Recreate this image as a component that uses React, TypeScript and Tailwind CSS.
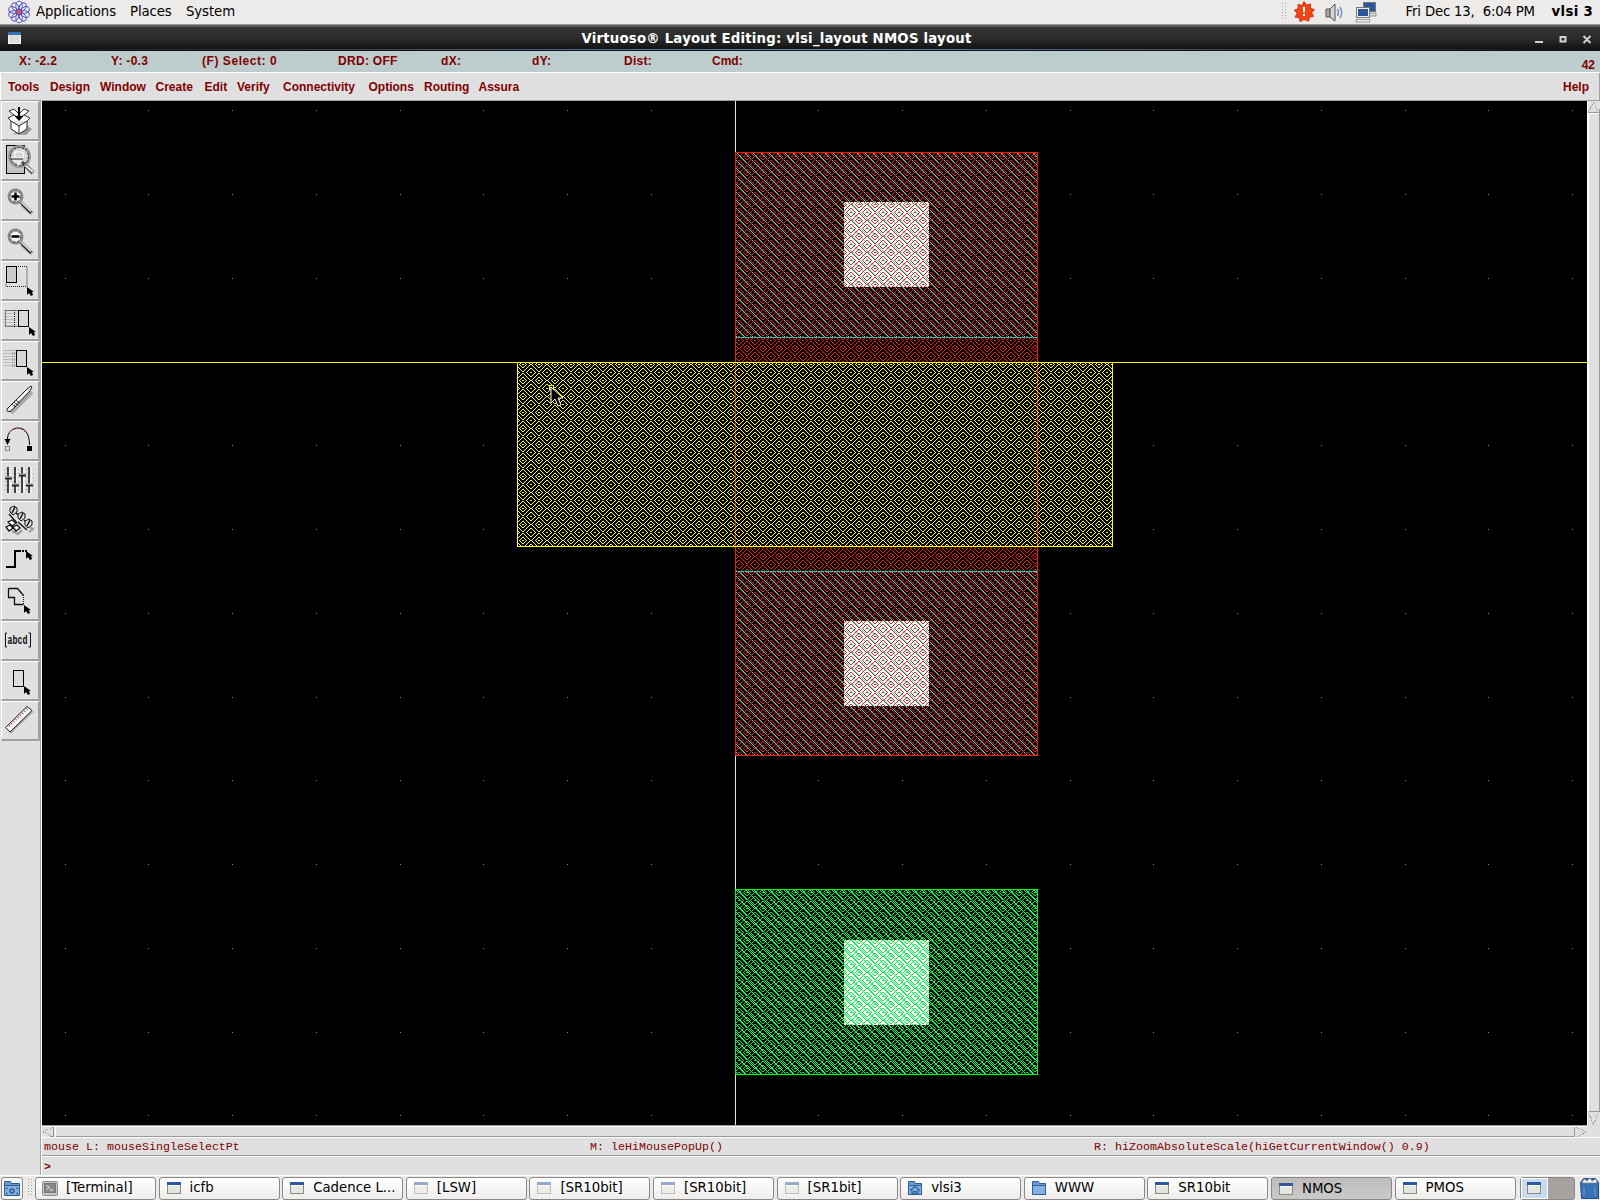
import type { ReactNode } from "react";

const wrap = (d: number) => Math.min(Math.abs(d), 16 - Math.abs(d));

// 16x16 stipple of nested diamonds, one pixel wide lines every four pixels
function diamondTile() {
  let d = "";
  for (let y = 0; y < 16; y++)
    for (let x = 0; x < 16; x++) {
      const s = Math.floor(wrap(x + 0.5 - 3)) + wrap(y - 4);
      if (s === 15 || s % 4 === 0) d += `M${x} ${y}h1v1h-1z`;
    }
  return d;
}

// 8x8 stipple of a falling diagonal
function hatchTile() {
  let d = "";
  for (let y = 0; y < 8; y++) d += `M${y} ${y}h1v1h-1z`;
  return d;
}

const DIAMONDS = diamondTile();
const HATCH = hatchTile();

function Stipple({ id, color }: { id: string; color: string }) {
  return (
    <pattern id={id} width="16" height="16" patternUnits="userSpaceOnUse">
      <path d={DIAMONDS} fill={color} />
    </pattern>
  );
}

function Box({ x, y, w, h, fill, stroke }: { x: number; y: number; w: number; h: number; fill: string; stroke?: string }) {
  return (
    <>
      <rect x={x} y={y} width={w} height={h} fill={fill} />
      {stroke && <rect x={x + 0.5} y={y + 0.5} width={w - 1} height={h - 1} fill="none" stroke={stroke} />}
    </>
  );
}

function GridDots() {
  const dots: ReactNode[] = [];
  for (let i = -8; i <= 10; i++)
    for (let j = -3; j <= 9; j++) {
      dots.push(<rect key={`${i},${j}`} x={Math.floor(735 + i * 83.75)} y={Math.floor(362 + j * 83.75)} width="1" height="1" fill="#8c8c8c" />);
    }
  return <>{dots}</>;
}

function LayoutCanvas() {
  return (
    <svg className="block shrink-0" width="1545" height="1024" viewBox="42 101 1545 1024" shapeRendering="crispEdges">
      <defs>
        <Stipple id="red" color="#f81a00" />
        <Stipple id="yellow" color="#ffff00" />
        <Stipple id="green" color="#00ff00" />
        <pattern id="cyan" width="8" height="8" patternUnits="userSpaceOnUse">
          <path d={HATCH} fill="#00f0f0" />
        </pattern>
      </defs>
      <rect x="42" y="101" width="1545" height="1024" fill="#000" />
      <GridDots />
      <rect x="735" y="101" width="1" height="1024" fill="#ffff00" />
      <rect x="42" y="362" width="1545" height="1" fill="#ffff00" />

      <Box x={844} y={202} w={85} h={85} fill="#fff" />
      <Box x={844} y={621} w={85} h={85} fill="#fff" />
      <Box x={735} y={152} w={303} h={186} fill="url(#cyan)" stroke="#00f0f0" />
      <Box x={735} y={571} w={303} h={185} fill="url(#cyan)" stroke="#00f0f0" />
      <rect x="735" y="152" width="303" height="604" fill="url(#red)" />
      <rect x="735.5" y="152.5" width="302" height="603" fill="none" stroke="#f81a00" />
      <Box x={517} y={362} w={596} h={185} fill="url(#yellow)" stroke="#ffff00" />

      <Box x={844} y={940} w={85} h={85} fill="#fff" />
      <Box x={735} y={889} w={303} h={186} fill="url(#cyan)" />
      <Box x={735} y={889} w={303} h={186} fill="url(#green)" stroke="#00ff00" />

      <rect x="549.5" y="385.5" width="4" height="4" fill="none" stroke="#ffff00" />
      <path d="M551 387v16l4-4 3 7 3-1-3-7h5z" fill="#000" stroke="#fff" shapeRendering="auto" />
    </svg>
  );
}

const Pointer = () => <path d="M27 26v8l2-2 2 3 2-1-1-3h2z" fill="#000" stroke="none" />;
const Magnifier = ({ children }: { children?: ReactNode }) => (
  <g transform="translate(0 1.5)">
    <path d="M22 22l10 9" stroke="#999" strokeWidth="4" />
    <path d="M21 20l10 10" stroke="#222" strokeWidth="3" />
    <path d="M21 19.500l10 9.500" stroke="#eee" strokeWidth="1.600" />
    <circle cx="15.500" cy="14" r="7" fill="#e6e6e6" stroke="#888" strokeWidth="2" />
    <circle cx="15.500" cy="14" r="5.500" fill="#f4f4f4" stroke="#333" strokeDasharray="3 1" />
    {children}
  </g>
);

const TOOLS: ReactNode[] = [
  <>
    <path d="M13 33l13 1 6-6-5-3z" fill="#999" stroke="none" />
    <path d="M11 20l8 5 8-5v8l-8 5-8-5z" fill="#fff" stroke="#222" />
    <path d="M19 25v8M11 20l-3-3 6-3 5 3 5-3 6 3-3 3M14 14l-5-4 5-2 4 4M24 14l5-4-5-2-4 4" fill="#fff" stroke="#333" />
    <path d="M19 6v13" stroke="#000" strokeWidth="2" />
    <path d="M14.500 15l4.500 5 4.500-5z" fill="#000" stroke="none" />
  </>,
  <>
    <rect x="6.500" y="4.500" width="18" height="28" fill="#c4c4c4" />
    <path d="M26 25l7 7" stroke="#555" strokeWidth="4" />
    <path d="M25 24l8 7" stroke="#eee" strokeWidth="2" />
    <circle cx="19.500" cy="15.500" r="10.500" fill="#e0e0e0" stroke="#999" strokeWidth="2" />
    <circle cx="19.500" cy="15.500" r="9" fill="#d4d4d4" stroke="#111" strokeDasharray="3 1" />
    <path d="M11 17h12M14 11h9v6M14 20h4v5M20 19v5M15 11v6" stroke="#fff" />
    <path d="M11 18h12M21 22h5M23 20v5" stroke="#222" />
  </>,
  <Magnifier><path d="M11.500 14h8M15.500 10v8" stroke="#000" strokeWidth="2.500" /></Magnifier>,
  <Magnifier><path d="M11.500 14h8" stroke="#000" strokeWidth="2.500" /></Magnifier>,
  <>
    <rect x="6.500" y="5.500" width="10" height="16" fill="#ccc" stroke="#000" />
    <path d="M18 5.500h9v20h-21v-4" stroke="#222" strokeDasharray="1 1" />
    <Pointer />
  </>,
  <>
    <path d="M3 9.500h14M3 12.500h14M3 15.500h14M3 18.500h14M3 21.500h14M3 24.500h14" stroke="#bbb" />
    <rect x="5.500" y="9.500" width="13" height="16" stroke="#222" strokeDasharray="1 1" />
    <path d="M14.500 9v17" stroke="#222" strokeDasharray="1 1" />
    <rect x="18.500" y="9.500" width="10" height="16" fill="#d8d8d8" stroke="#000" />
    <g transform="translate(2 0)"><Pointer /></g>
  </>,
  <>
    <path d="M3 9.500h13M3 12.500h13M3 15.500h13M3 18.500h13M3 21.500h13M3 24.500h13" stroke="#bbb" />
    <path d="M12.500 9v17M14.500 9v17" stroke="#999" strokeDasharray="1 1" />
    <rect x="16.500" y="9.500" width="10" height="16" fill="#d8d8d8" stroke="#000" />
    <Pointer />
  </>,
  <>
    <path d="M11 32L32 11" stroke="#aaa" strokeWidth="4" />
    <path d="M7 28L27 8l4-3 1 1-2 4-19 20q-5 2-4-2z" fill="#e4e4e4" stroke="#222" />
    <path d="M12 23l4 3M14 21l4 3M16 19l4 3" stroke="#111" />
    <path d="M10 27L29 8" stroke="#fff" />
  </>,
  <>
    <path d="M7.500 18c0-7 5-11 11-11s11 5 11 17" stroke="#000" />
    <path d="M10 11c4-5 13-5 17 2" stroke="#b33" strokeDasharray="2 2" />
    <path d="M4.500 18h6l-3 6z" fill="#000" stroke="none" />
    <rect x="27" y="25" width="5" height="5" fill="#000" stroke="none" />
    <rect x="5.500" y="25.500" width="4" height="4" stroke="#333" strokeDasharray="1 1" />
  </>,
  <>
    <path d="M5 8.500h29M5 12.500h29M5 16.500h29M5 20.500h29M5 24.500h29M5 28.500h29" stroke="#b0b0b0" strokeDasharray="2 2" />
    <path d="M8 6v26M15 6v26M22 6v26M29 6v26" stroke="#111" strokeWidth="1.500" />
    <path d="M10 6v26M17 6v26M24 6v26M31 6v26" stroke="#fff" />
    <path d="M5 17h7M12 24h7M19 14h7M26 24h7" stroke="#222" strokeWidth="3" />
    <path d="M5 16h7M12 23h7M19 13h7M26 23h7" stroke="#eee" />
  </>,
  <>
    <path d="M12 30l6 3 4-4M30 26l3 2-4 3" stroke="#999" strokeWidth="2" />
    <path d="M9 13l8 9M18 21l9 8M16 12l5 4M24 19l4 3" stroke="#111" strokeWidth="1.400" />
    <path d="M10 7l4-2 3 2v4l-4 3-3-3zM18 13l4-2 3 2v4l-4 3-3-3zM25 20l4-2 3 2v4l-4 3-3-3z" fill="#ddd" stroke="#111" />
    <path d="M12 12l3-6M20 18l3-6M27 25l3-6" stroke="#111" strokeWidth="1.500" />
    <path d="M8 21l4-2 4 3-4 3zM13 26l4-2 3 3-4 3zM6 26l4-2 3 3-4 3z" fill="#fff" stroke="#111" strokeWidth="1.300" />
  </>,
  <>
    <path d="M6 26h9V10h5" stroke="#000" strokeWidth="2" />
    <path d="M19 10h8" stroke="#000" strokeWidth="2" strokeDasharray="2 1" />
    <g transform="translate(-1 -16)"><Pointer /></g>
  </>,
  <>
    <path d="M8.500 7.500h9l6 7M8.500 7.500v9h6v7h9" stroke="#111" strokeWidth="1.300" />
    <path d="M23.500 14v10" stroke="#111" strokeDasharray="1 1" />
    <g transform="translate(-3 -2)"><Pointer /></g>
  </>,
  <>
    <path d="M7 12H5.500v14H7M28.500 12h2v14h-2" stroke="#111" />
    <text x="7.500" y="22.500" fill="#111" stroke="none" fontFamily="Liberation Mono, monospace" fontSize="13" fontWeight="bold" textLength="20" lengthAdjust="spacingAndGlyphs">abcd</text>
  </>,
  <>
    <rect x="13.500" y="9.500" width="10" height="16" fill="#ddd" stroke="#000" />
    <g transform="translate(-3 -1)"><Pointer /></g>
  </>,
  <>
    <path d="M10 32L33 10" stroke="#aaa" strokeWidth="2" />
    <path d="M5.500 26.500L27 5.500l5 4L10 31z" fill="#f2f2f2" stroke="#222" />
    <path d="M9 25L28 7" stroke="#955" strokeWidth="2" strokeDasharray="1 2" />
  </>,
];

function Tool({ children }: { children: ReactNode }) {
  return (
    <div className="h-10 w-[39px] border-t border-r-2 border-b-2 border-l border-white border-r-[#a0a0a0] border-b-[#a0a0a0] bg-[#e0e0e0]">
      <svg className="-ml-px block" width="38" height="37" viewBox="1 1 38 37" fill="none" stroke="#000">{children}</svg>
    </div>
  );
}

function WindowIcon({ faded }: { faded?: boolean }) {
  return (
    <svg className={faded ? "shrink-0 opacity-50" : "shrink-0"} width="16" height="16" viewBox="0 0 16 16">
      <rect x="1.500" y="2.500" width="13" height="11" fill="#e4e6e0" stroke="#8a8c88" />
      <rect x="1" y="2" width="14" height="3" fill="#2c5aa0" />
      <path d="M2 5.500h12" stroke="#fff" />
    </svg>
  );
}
function TerminalIcon() {
  return (
    <svg className="shrink-0" width="16" height="16" viewBox="0 0 16 16">
      <rect x=".5" y="1.500" width="15" height="14" rx="1" fill="#c9c9c6" stroke="#8d8d8a" />
      <rect x="2.500" y="3.500" width="11" height="9" fill="#858884" stroke="#777" />
      <path d="M4.500 5.500l3 2-3 2M8 10h3" fill="none" stroke="#eee" />
    </svg>
  );
}
function FolderIcon({ home }: { home?: boolean }) {
  return (
    <svg className="shrink-0" width="16" height="16" viewBox="0 0 16 16">
      <path d="M1.500 1.500h6l1 2h6v11h-13z" fill="#6d9ad0" stroke="#2f5d96" />
      <path d="M1.500 5.500h13v9h-13z" fill="#86b0df" stroke="#2f5d96" />
      {home && <path d="M3 10.500l5-4 5 4M5 10v3.500h2v-2h2v2h2V10" fill="none" stroke="#2f5d96" strokeWidth="1.200" />}
    </svg>
  );
}
function PlacesIcon() {
  return (
    <svg className="shrink-0" width="18" height="18" viewBox="0 0 18 18">
      <path d="M1.500 2.500h6l1 2h8v12h-15z" fill="#6d9ad0" stroke="#2f5d96" />
      <path d="M1.500 6.500h15v10h-15z" fill="#86b0df" stroke="#2f5d96" />
      <path d="M5 9H3.500v1.500M13 9h1.500v1.500M5 15H3.500v-1.500M13 15h1.500v-1.500" fill="none" stroke="#2f5d96" />
      <circle cx="9" cy="12" r="2" fill="none" stroke="#2f5d96" strokeWidth="1.500" />
    </svg>
  );
}

const TASKS: { label: string; icon: ReactNode; active?: boolean }[] = [
  { label: "[Terminal]", icon: <TerminalIcon /> },
  { label: "icfb", icon: <WindowIcon /> },
  { label: "Cadence L...", icon: <WindowIcon /> },
  { label: "[LSW]", icon: <WindowIcon faded /> },
  { label: "[SR10bit]", icon: <WindowIcon faded /> },
  { label: "[SR10bit]", icon: <WindowIcon faded /> },
  { label: "[SR1bit]", icon: <WindowIcon faded /> },
  { label: "vlsi3", icon: <FolderIcon home /> },
  { label: "WWW", icon: <FolderIcon /> },
  { label: "SR10bit", icon: <WindowIcon /> },
  { label: "NMOS", icon: <WindowIcon />, active: true },
  { label: "PMOS", icon: <WindowIcon /> },
];

function Grip({ className }: { className: string }) {
  return (
    <svg className={"shrink-0 " + className} width="6" height="18" viewBox="0 0 6 18">
      <path d="M1.500 0v18M4.500 0v18" stroke="#a8a6a2" strokeDasharray="1 2" />
    </svg>
  );
}

function TopPanel() {
  return (
    <div className="flex h-[25px] items-center border-b border-[#9a9a94] bg-[#edebe9] text-[13.3px] leading-none text-black">
      <svg className="ml-[7px]" width="24" height="24" viewBox="-12 -12 24 24" fill="none">
        {[0, 36, 72, 108, 144, 180, 216, 252, 288, 324].map((a) => (
          <ellipse key={a} cx="0" cy="-6.500" rx="3.200" ry="4.300" stroke="#4a4ac4" strokeWidth=".9" transform={`rotate(${a})`} />
        ))}
        <circle r="3" stroke="#4a4ac4" />
        <path d="M-2.500 0h5M0-2.500v5" stroke="#e33" strokeWidth="1.500" />
      </svg>
      <span className="ml-[5px] w-[94px] tracking-[-0.1px]">Applications</span>
      <span className="w-14 tracking-[-0.1px]">Places</span>
      <span className="tracking-[-0.1px]">System</span>
      <Grip className="ml-auto" />
      <svg className="ml-1.5" width="22" height="22" viewBox="-11 -11 22 22">
        <path d="M0-10.500l2.600 3.400 4.200-1-.3 4.200 4 1.600-2.800 3 2 3.900-4.200.5-.9 4.200L0 7.400l-3.900 2.400-.9-4.200-4.200-.5 2-3.900-2.800-3 4-1.600-.3-4.200 4.200 1z" fill="#f04316" stroke="#c92a06" strokeWidth=".8" />
        <path d="M-1.200-5h2.400l-.5 5.500h-1.400zM-1 2h2v2h-2z" fill="#fff" />
      </svg>
      <svg className="ml-[9px]" width="21" height="21" viewBox="0 0 21 21" fill="none">
        <path d="M2 7h4v8H2z" fill="#aaa" stroke="#555" />
        <path d="M6 7l5-5v17l-5-4z" fill="#d4d4d0" stroke="#555" />
        <path d="M13.500 7q2 3.500 0 7M16 5q3.500 5.500 0 11" stroke="#7193c4" strokeWidth="1.500" />
      </svg>
      <svg className="ml-2.5" width="22" height="22" viewBox="0 0 22 22">
        <rect x="8.500" y="1.500" width="12" height="9" fill="#2c559b" stroke="#777" />
        <path d="M14 12h7v3h-7z" fill="#ddd" stroke="#888" strokeWidth=".8" />
        <rect x="1.500" y="6.500" width="13" height="10" fill="#eee" stroke="#777" />
        <rect x="3" y="8" width="10" height="7" fill="#2c559b" />
        <path d="M1 18.500h14v2.500H1z" fill="#eee" stroke="#888" strokeWidth=".8" />
      </svg>
      <span className="ml-[29px] w-[146px] tracking-[-0.2px] whitespace-pre">Fri Dec 13,  6:04 PM</span>
      <span className="mr-[7px] tracking-[0.3px] font-bold">vlsi 3</span>
    </div>
  );
}

function TitleBar() {
  return (
    <div className="relative flex h-[26px] items-center justify-center border-t-2 border-b border-t-[#5c5c58] border-b-[#111] bg-linear-to-b from-[#343434] via-[#2c2c2c] to-[#101010]">
      <svg className="absolute top-1 left-[7px]" width="16" height="15" viewBox="0 0 16 15">
        <rect x="1.500" y="1.500" width="12" height="11" fill="#deded8" stroke="#f4f4f4" />
        <rect x="1" y="1" width="13" height="3" fill="#3a6cb4" />
      </svg>
      <span className="ml-[-47px] text-[13.3px] leading-none font-bold tracking-[0.21px] whitespace-nowrap text-white">Virtuoso® Layout Editing: vlsi_layout NMOS layout</span>
      <svg className="absolute top-1.5 right-2" width="60" height="14" viewBox="0 0 60 14" fill="none" stroke="#d2d2d2" strokeWidth="2">
        <path d="M3 9h8M28.500 4h5v4.500h-5zM51.500 3l7 7M58.500 3l-7 7" />
      </svg>
      <div className="absolute bottom-0 left-0 h-px w-full bg-linear-to-r from-transparent via-[#6688b0] to-transparent" />
    </div>
  );
}

function StatusBar() {
  return (
    <div className="relative flex h-[22px] items-center border-b border-white bg-[#bdcdcd] pb-0.5 pl-[19px] text-xs leading-none tracking-[0.3px]">
      <span className="w-[92px]">X: -2.2</span>
      <span className="w-[91px]">Y: -0.3</span>
      <span className="w-[136px] tracking-[0.55px]">(F) Select: 0</span>
      <span className="w-[103px]">DRD: OFF</span>
      <span className="w-[91px]">dX:</span>
      <span className="w-[92px]">dY:</span>
      <span className="w-[88px]">Dist:</span>
      <span className="tracking-normal">Cmd:</span>
      <span className="mt-2 mr-[5px] ml-auto tracking-normal">42</span>
    </div>
  );
}

const MENUS = [
  { label: "Tools", width: "w-[42px]" },
  { label: "Design", width: "w-[50px]" },
  { label: "Window", width: "w-[55.5px]" },
  { label: "Create", width: "w-[49px]" },
  { label: "Edit", width: "w-[32.5px]" },
  { label: "Verify", width: "w-[46px]" },
  { label: "Connectivity", width: "w-[85.500px]" },
  { label: "Options", width: "w-[55.500px]" },
  { label: "Routing", width: "w-[54.500px]" },
  { label: "Assura", width: "w-[50px]" },
];

function MenuBar() {
  return (
    <div className="flex h-[28px] items-center border-r border-b border-l border-[#a0a0a0] border-l-white bg-[#e0e0e0] pr-[10px] pl-[7px] text-xs leading-none">
      {MENUS.map((m) => <span key={m.label} className={m.width}>{m.label}</span>)}
      <span className="ml-auto">Help</span>
    </div>
  );
}

function VScroll() {
  return (
    <svg className="block shrink-0" width="13" height="1024" viewBox="0 0 13 1024" fill="none" shapeRendering="crispEdges">
      <rect width="13" height="1024" fill="#e0e0e0" />
      <path d="M.5 0v1024M1 12.500h11M1.500 12.500v997" stroke="#fff" />
      <path d="M1 11.500h11v-4M12.500 12v998M2 1010.500h11" stroke="#999" />
      <path d="M1.500 11L6.500 1l5 10M1.500 1012l5 11 5-11" stroke="#999" strokeDasharray="1 1" />
    </svg>
  );
}

function HScroll() {
  return (
    <svg className="block" width="1558" height="14" viewBox="0 0 1558 14" fill="none" shapeRendering="crispEdges">
      <rect width="1558" height="14" fill="#e0e0e0" />
      <path d="M0 .5h1545" stroke="#999" />
      <path d="M0 1.500h1545M13.500 2v10M0 12.500h1558" stroke="#fff" />
      <path d="M14 11.500h1518.500V2M11.500 2v9.500H8" stroke="#999" />
      <path d="M11 2L1.500 7l9.500 5M1534 2l10 5-10 5" stroke="#999" strokeDasharray="1 1" />
    </svg>
  );
}

function Taskbar() {
  return (
    <div className="flex h-[25px] items-center border-t border-white bg-[#edebe9] text-[13.3px] leading-none text-black">
      <div className="ml-px flex h-[23px] w-[22px] shrink-0 items-center justify-center rounded-[3px] border border-[#8a8884] bg-[#f6f6f5]"><PlacesIcon /></div>
      <Grip className="mr-0.5 ml-1" />
      <div className="flex gap-[2.600px]">
        {TASKS.map((t, i) => (
          <div
            key={i}
            className={
              "flex h-[23px] w-[121px] shrink-0 items-center gap-2 rounded-[3px] border border-[#8a8884] pl-1.5 whitespace-nowrap " +
              (t.active ? "bg-linear-to-b from-[#bfbdbb] to-[#cbc9c7] pt-0.5" : "bg-linear-to-b from-white to-[#eeedeb]")
            }
          >
            {t.icon}
            <span>{t.label}</span>
          </div>
        ))}
      </div>
      <div className="ml-1 flex h-[23px] w-[55px] shrink-0 rounded-[3px] border border-[#8a8884] bg-[#a5a29f]">
        <div className="flex w-[27px] items-center justify-center border border-white bg-[#c8daef]"><WindowIcon /></div>
      </div>
      <svg className="ml-1 shrink-0" width="21" height="23" viewBox="0 0 21 23">
        <path d="M1.500 5.500l3-4h12l3 4v16h-17z" fill="#3a70b4" stroke="#234f8c" />
        <path d="M3 6l2-4 3 2 3-3 2 3 4-2 1 4z" fill="#f2f2f2" stroke="#888" strokeWidth=".7" />
        <path d="M5 10v9M16 10v9" stroke="#6e9bd2" />
      </svg>
    </div>
  );
}

export default function App() {
  return (
    <div className="flex h-[1200px] w-[1600px] flex-col overflow-hidden bg-[#e0e0e0] font-['DejaVu_Sans',sans-serif]">
      <TopPanel />
      <TitleBar />
      <div className="font-['Liberation_Sans',sans-serif] font-bold text-[#800000]">
        <StatusBar />
        <MenuBar />
      </div>
      <div className="flex h-[1074px]">
        <div className="w-[42px] border-r border-[#fff] bg-[#e0e0e0] pl-px">
          <div className="h-full w-10 border-r border-[#a0a0a0]">
            {TOOLS.map((t, i) => <Tool key={i}>{t}</Tool>)}
          </div>
        </div>
        <div className="flex w-[1558px] flex-col">
          <div className="flex">
            <LayoutCanvas />
            <VScroll />
          </div>
          <HScroll />
          <div className="flex h-[17px] items-center border-b border-[#999] pt-px pl-0.5 font-['Liberation_Mono',monospace] text-[11.667px] leading-none whitespace-pre text-[#800000]">
            <span className="w-[546px]">mouse L: mouseSingleSelectPt</span>
            <span className="w-[504px]">M: leHiMousePopUp()</span>
            <span>R: hiZoomAbsoluteScale(hiGetCurrentWindow() 0.9)</span>
          </div>
          <div className="flex h-[19px] items-center border-t border-white pt-1 pl-0.5 font-['Liberation_Mono',monospace] text-[11.667px] leading-none font-bold text-[#800000]">&gt;</div>
        </div>
      </div>
      <Taskbar />
    </div>
  );
}
